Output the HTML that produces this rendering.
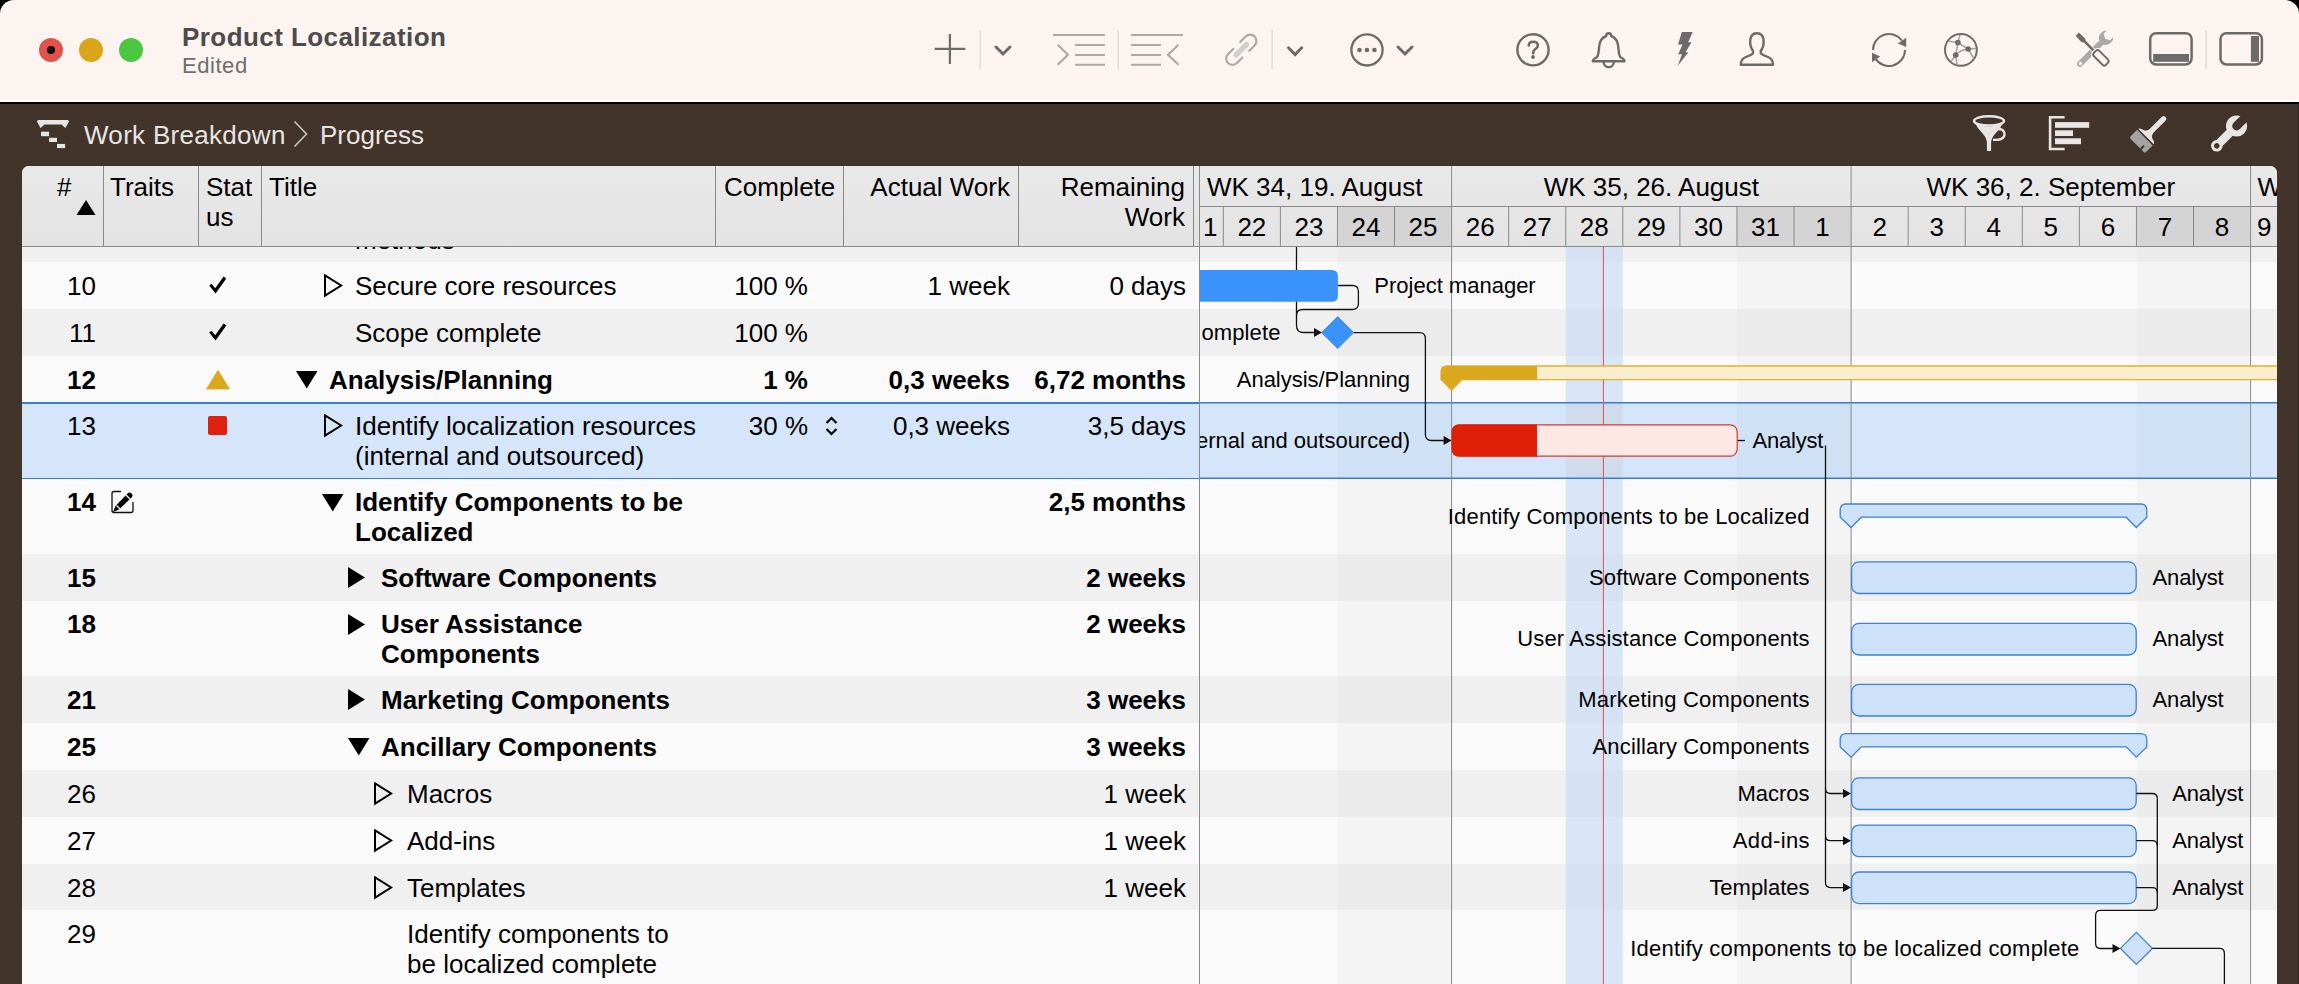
<!DOCTYPE html><html><head><meta charset="utf-8"><style>
*{margin:0;padding:0;box-sizing:border-box}
html,body{width:2299px;height:984px;overflow:hidden;background:#42342b;font-family:"Liberation Sans", sans-serif;}
.a{position:absolute}
.t{position:absolute;font-size:26px;line-height:30px;white-space:nowrap;color:#000}
.b{font-weight:700}
.r{text-align:right}
</style></head><body>
<div class="a" style="left:0;top:0;width:2299px;height:40px;background:#000"></div>
<div class="a" style="left:0;top:0;width:2299px;height:101px;background:#fcf4f1;border-radius:14px 14px 0 0"></div>
<div class="a" style="left:0;top:100px;width:2299px;height:2px;background:#fff"></div>
<div class="a" style="left:0;top:102px;width:2299px;height:1.5px;background:#000"></div>
<div class="a" style="left:39px;top:38px;width:24px;height:24px;border-radius:50%;background:#e0524c"></div>
<div class="a" style="left:79px;top:38px;width:24px;height:24px;border-radius:50%;background:#d9a619"></div>
<div class="a" style="left:119px;top:38px;width:24px;height:24px;border-radius:50%;background:#4cc840"></div>
<div class="a" style="left:47px;top:46px;width:8px;height:8px;border-radius:50%;background:#1a0a08"></div>
<div class="t b" style="left:182px;top:22px;color:#4d4b4b;letter-spacing:0.43px">Product Localization</div>
<div class="t" style="left:182px;top:53px;font-size:22px;line-height:26px;color:#6e6e6e;letter-spacing:0.55px">Edited</div>
<svg class="a" style="left:0;top:0" width="2299" height="100"><path d="M934.7 48.8 H965.3 M949.9 34 V64" stroke="#6b6b6b" stroke-width="2.2" fill="none"/><rect x="979.5" y="30" width="1.3" height="39.5" fill="#dcd8d6"/><path d="M996 47 L1003.0 54 L1010 47" stroke="#6b6b6b" stroke-width="3" fill="none" stroke-linecap="round"/><path d="M1053 35 H1105 M1075 45 H1105 M1075 55 H1105 M1075 64.8 H1105" stroke="#aaaaaa" stroke-width="2" fill="none"/><path d="M1057.7 44.7 L1067.9 54.8 L1057.7 64.8" stroke="#aaaaaa" stroke-width="2.2" fill="none"/><rect x="1117.5" y="30.5" width="1.3" height="39" fill="#dcd8d6"/><path d="M1131 35 H1183 M1131 45 H1161 M1131 55 H1161 M1131 64.8 H1161" stroke="#aaaaaa" stroke-width="2" fill="none"/><path d="M1178.5 44.7 L1168 54.8 L1178.5 64.8" stroke="#aaaaaa" stroke-width="2.2" fill="none"/><g transform="translate(1241.3 49.8) rotate(-45)"><path d="M-4 -6.3 H-12.5 A6.3 6.3 0 0 0 -12.5 6.3 H-4" stroke="#aaaaaa" stroke-width="2.2" fill="none"/><path d="M4 -6.3 H12.5 A6.3 6.3 0 0 1 12.5 6.3 H4" stroke="#aaaaaa" stroke-width="2.2" fill="none"/><rect x="-10" y="-2.7" width="20" height="5.4" rx="2.7" fill="#cfcfcf"/></g><rect x="1271.5" y="30" width="1.3" height="39.5" fill="#dcd8d6"/><path d="M1288.5 47.8 L1295.1 54.599999999999994 L1301.7 47.8" stroke="#6b6b6b" stroke-width="3" fill="none" stroke-linecap="round"/><circle cx="1367" cy="49.9" r="15.6" stroke="#6b6b6b" stroke-width="2.3" fill="none"/><circle cx="1359.5" cy="50" r="2.3" fill="#6b6b6b"/><circle cx="1367" cy="50" r="2.3" fill="#6b6b6b"/><circle cx="1374.4" cy="50" r="2.3" fill="#6b6b6b"/><path d="M1398 47 L1405.0 54 L1412 47" stroke="#6b6b6b" stroke-width="3" fill="none" stroke-linecap="round"/><circle cx="1533" cy="49.8" r="15.6" stroke="#6b6b6b" stroke-width="2.4" fill="none"/><path d="M1528.8 45.5 Q1528.8 41.8 1533.3 41.8 Q1537.8 41.8 1537.8 45.4 Q1537.8 47.6 1535.4 49 Q1533.2 50.3 1533.2 53.3" stroke="#6b6b6b" stroke-width="2.6" fill="none" stroke-linecap="round"/><circle cx="1533" cy="57" r="1.9" fill="#6b6b6b"/><path d="M1608.7 33.2 Q1611.2 33.2 1611.3 36 Q1617.6 38.3 1618.3 47 Q1618.8 55 1620.4 57.3 Q1625 59.6 1624.5 61.2 H1592.9 Q1592.4 59.6 1597 57.3 Q1598.6 55 1599.1 47 Q1599.8 38.3 1606.1 36 Q1606.2 33.2 1608.7 33.2 Z" stroke="#6b6b6b" stroke-width="2.4" fill="none" stroke-linejoin="round"/><path d="M1603.6 62 A5.1 5.1 0 0 0 1613.8 62" stroke="#6b6b6b" stroke-width="2.4" fill="none"/><path d="M1681.8 32 H1692.6 L1688.2 42.3 H1691.6 L1685.5 52.2 H1688.4 L1677.8 65.8 L1681.9 54.3 H1678.2 L1682.5 44.6 H1678 Z" fill="#6b6b6b"/><path d="M1756.9 33.2 Q1763.6 33.2 1763.6 41.8 Q1763.6 47.8 1760.8 50.6 V53.2 Q1762.2 54.8 1768 57 Q1773 59 1773 64.7 H1740.8 Q1740.8 59 1745.8 57 Q1751.6 54.8 1753 53.2 V50.6 Q1750.2 47.8 1750.2 41.8 Q1750.2 33.2 1756.9 33.2 Z" stroke="#6b6b6b" stroke-width="2.4" fill="none" stroke-linejoin="round"/><path d="M1873 49.9 A16 16 0 0 1 1901.9 40.5" stroke="#6b6b6b" stroke-width="2" fill="none"/><path d="M1905 49.9 A16 16 0 0 1 1875.1 57.9" stroke="#6b6b6b" stroke-width="2" fill="none"/><path d="M1897.8 43.5 L1906.2 37.8 L1906.2 46.9 Z" fill="#6b6b6b"/><path d="M1872 52.8 L1872 62.2 L1880.2 56.5 Z" fill="#6b6b6b"/><circle cx="1960.9" cy="49.9" r="15.9" stroke="#6b6b6b" stroke-width="2" fill="none"/><path d="M1957.9 42.6 L1960 35 M1957.9 42.6 L1949 41.3 M1957.9 42.6 L1968.2 49 M1968.2 49 L1976 48.6 M1968.2 49 L1973.8 58.5 M1968.2 49 Q1960 50 1955.7 55 M1955.7 55 L1957.9 42.6 M1955.7 55 L1951 61.5 M1955.7 55 L1957 65.2" stroke="#a3a3a3" stroke-width="1.5" fill="none"/><circle cx="1957.9" cy="42.6" r="2.8" fill="#6b6b6b"/><circle cx="1968.2" cy="49" r="2.8" fill="#6b6b6b"/><circle cx="1955.7" cy="55" r="2.8" fill="#6b6b6b"/><g transform="translate(2093.5 50.4) rotate(45)"><rect x="-2.9" y="-13" width="5.8" height="35" rx="2.9" fill="#a9a9a9"/><circle cx="0" cy="18.5" r="1.7" fill="#fcf4f1"/><path d="M-2.9 -11 Q-7 -13 -7 -18 Q-7 -21.5 -4.6 -23.5 V-18.8 L0 -16.5 L4.6 -18.8 V-23.5 Q7 -21.5 7 -18 Q7 -13 2.9 -11 Z" fill="#a9a9a9"/></g><g transform="translate(2093.5 50.4) rotate(-45)"><path d="M-2.2 -23 H2.2 L2.6 -15 L1.3 -12 V1.5 H-1.3 V-12 L-2.6 -15 Z" fill="#6b6b6b" stroke="#fcf4f1" stroke-width="1.5" paint-order="stroke"/><rect x="-3.8" y="2" width="7.6" height="17" rx="2.5" stroke="#fcf4f1" stroke-width="4.5" fill="#fcf4f1"/><rect x="-3.8" y="2" width="7.6" height="17" rx="2.5" stroke="#6b6b6b" stroke-width="1.9" fill="none"/></g><rect x="2150.2" y="33.2" width="41.4" height="31.3" rx="6" stroke="#6b6b6b" stroke-width="2.5" fill="none"/><rect x="2153.2" y="54" width="35.8" height="7.8" fill="#6b6b6b"/><rect x="2205.4" y="30" width="1.3" height="39.8" fill="#dcd8d6"/><rect x="2220.5" y="33.2" width="41.4" height="31.3" rx="6" stroke="#6b6b6b" stroke-width="2.5" fill="none"/><rect x="2250.9" y="36" width="8.1" height="25.8" fill="#6b6b6b"/></svg>
<div class="t" style="left:84px;top:120px;color:#e8e5e3;letter-spacing:0.3px">Work Breakdown</div>
<div class="t" style="left:320px;top:120px;color:#e8e5e3">Progress</div>
<svg class="a" style="left:0;top:103px" width="2299" height="63" viewBox="0 103 2299 63"><path d="M38.5 120 H67.5 Q69 120 69 121.5 L65.4 128.1 L61.5 124.6 H44.5 L40.5 128.1 L37 121.5 Q37 120 38.5 120 Z" fill="#e8e6e4"/><rect x="41" y="131.7" width="8.1" height="4.5" fill="#e8e6e4"/><rect x="49.1" y="137.8" width="7.9" height="4.2" fill="#e8e6e4"/><rect x="57" y="143.9" width="8.1" height="4.2" fill="#e8e6e4"/><path d="M294.5 121.5 L306.5 134 L294.5 146.5" stroke="#c9c5c2" stroke-width="1.6" fill="none"/><ellipse cx="1989" cy="120.9" rx="15" ry="4.6" stroke="#e8e6e4" stroke-width="2.4" fill="none"/><path d="M1974.5 122 Q1977 128 1983 134 Q1986.8 138 1986.9 143 V151 H1991.1 V143 Q1991.2 138 1995 134 Q2001 128 2003.5 122 Q1996 126.5 1989 126.5 Q1982 126.5 1974.5 122 Z" fill="#e8e6e4"/><path d="M1992 131 Q1998 127.5 2002.5 130 Q2005.5 132.5 2004 136.5 Q2001.5 140.5 1993 139.8" stroke="#e8e6e4" stroke-width="2.4" fill="none"/><path d="M2064.6 117.2 H2050.1 V149 H2064.6" stroke="#e8e6e4" stroke-width="2.6" fill="none"/><rect x="2055" y="122.1" width="34.2" height="5.7" fill="#e8e6e4"/><rect x="2055" y="130.3" width="18" height="5.7" fill="#e8e6e4"/><rect x="2055" y="138.3" width="26" height="5.9" fill="#e8e6e4"/><g transform="translate(2145.3 137.2) rotate(45)"><rect x="-2.7" y="-28.5" width="5.4" height="22" rx="2.7" fill="#e8e6e4"/><path d="M-2.7 -9 Q-3 -5 -6.5 -3.8 Q-10.5 -3 -11 -1 H11 Q10.5 -3 6.5 -3.8 Q3 -5 2.7 -9 Z" fill="#e8e6e4"/><path d="M-11 0.6 H11 V10 Q11 11.6 9.4 11.6 H6.2 V7 H4.2 V11.6 H-9.4 Q-11 11.6 -11 10 Z" fill="#a3a3a3"/></g><mask id="wm"><rect x="2190" y="105" width="80" height="60" fill="#fff"/><g transform="translate(2216.8 145.8) rotate(45)"><circle cx="0" cy="0" r="2.7" fill="#000"/><circle cx="0" cy="-28" r="4.4" fill="#000"/><rect x="-4.4" y="-42" width="8.8" height="14" fill="#000"/></g></mask><g mask="url(#wm)"><g transform="translate(2216.8 145.8) rotate(45)"><rect x="-4.3" y="-24" width="8.6" height="24" fill="#e8e6e4"/><circle cx="0" cy="0" r="5.8" fill="#e8e6e4"/><circle cx="0" cy="-28" r="10.6" fill="#e8e6e4"/></g></g></svg>
<div class="a" style="left:22px;top:166px;width:2255px;height:818px;background:#fafafa;border-radius:7px 7px 0 0;overflow:hidden">
<div class="a" style="left:0px;top:0px;width:2255px;height:80px;background:linear-gradient(#e9e9e9,#e3e3e3)"></div>
<div class="a" style="left:0px;top:80px;width:2255px;height:1px;background:#8a8a8a"></div>
<div class="a" style="left:81px;top:0px;width:1px;height:80px;background:#8a8a8a"></div>
<div class="a" style="left:176px;top:0px;width:1px;height:80px;background:#8a8a8a"></div>
<div class="a" style="left:239px;top:0px;width:1px;height:80px;background:#8a8a8a"></div>
<div class="a" style="left:693px;top:0px;width:1px;height:80px;background:#8a8a8a"></div>
<div class="a" style="left:821px;top:0px;width:1px;height:80px;background:#8a8a8a"></div>
<div class="a" style="left:996px;top:0px;width:1px;height:80px;background:#8a8a8a"></div>
<div class="a" style="left:1171px;top:0px;width:1px;height:80px;background:#8a8a8a"></div>
<div class="a" style="left:1177px;top:0px;width:1px;height:80px;background:#8a8a8a"></div>
<div class="t" style="left:35px;top:6px;">#</div>
<svg class="a" style="left:54px;top:34px" width="20" height="15"><path d="M10 0L19.5 15H0.5Z" fill="#000"/></svg>
<div class="t" style="left:88px;top:6px;">Traits</div>
<div class="t" style="left:184px;top:6px;">Stat</div>
<div class="t" style="left:184px;top:36px;">us</div>
<div class="t" style="left:247px;top:6px;">Title</div>
<div class="t" style="left:702px;top:6px;">Complete</div>
<div class="t" style="right:1267px;top:6px;">Actual Work</div>
<div class="t" style="right:1092px;top:6px;">Remaining</div>
<div class="t" style="right:1092px;top:36px;">Work</div>
<div class="a" style="left:0px;top:81px;width:1177px;height:15px;background:#f0f0f0"></div>
<div class="a" style="left:0;top:81px;width:1177px;height:15px;overflow:hidden"><div class="t" style="left:333px;top:-22.5px">methods</div></div>
<div class="a" style="left:0px;top:96px;width:1177px;height:47px;background:#fafafa"></div>
<div class="t" style="right:2181px;top:105px;">10</div>
<svg class="a" style="left:186px;top:110px" width="19" height="19"><path d="M1.2 9.5 L3.6 7.7 L7.2 12.3 L15.6 0.6 L18.3 2.4 L7.6 17.6 Z" fill="#000"/></svg>
<svg class="a" style="left:302px;top:108px" width="19" height="24"><path d="M1 1.3 L17.2 11.5 L1 21.7 Z" fill="none" stroke="#000" stroke-width="2" stroke-linejoin="miter"/></svg>
<div class="t" style="left:333px;top:105px;">Secure core resources</div>
<div class="t" style="right:1469px;top:105px;">100 %</div>
<div class="t" style="right:1267px;top:105px;">1 week</div>
<div class="t" style="right:1091px;top:105px;">0 days</div>
<div class="a" style="left:0px;top:143px;width:1177px;height:47px;background:#f0f0f0"></div>
<div class="t" style="right:2181px;top:152px;">11</div>
<svg class="a" style="left:186px;top:157px" width="19" height="19"><path d="M1.2 9.5 L3.6 7.7 L7.2 12.3 L15.6 0.6 L18.3 2.4 L7.6 17.6 Z" fill="#000"/></svg>
<div class="t" style="left:333px;top:152px;">Scope complete</div>
<div class="t" style="right:1469px;top:152px;">100 %</div>
<div class="a" style="left:0px;top:190px;width:1177px;height:46px;background:#fafafa"></div>
<div class="t b" style="right:2181px;top:199px;">12</div>
<svg class="a" style="left:184px;top:204px" width="24" height="20"><path d="M12 0.5 L23.3 18.9 L0.7 18.9 Z" fill="#d9a81c" stroke="#d9a81c" stroke-width="1" stroke-linejoin="round"/></svg>
<svg class="a" style="left:274px;top:205px" width="22" height="18"><path d="M0 0 H21.5 L10.75 17.5 Z" fill="#000"/></svg>
<div class="t b" style="left:307px;top:199px;">Analysis/Planning</div>
<div class="t b" style="right:1469px;top:199px;">1 %</div>
<div class="t b" style="right:1267px;top:199px;">0,3 weeks</div>
<div class="t b" style="right:1091px;top:199px;">6,72 months</div>
<div class="a" style="left:0px;top:236px;width:1177px;height:77px;background:#d5e6fa"></div>
<div class="a" style="left:0px;top:236px;width:2255px;height:1.5px;background:#3b7bd8"></div>
<div class="a" style="left:0px;top:311.5px;width:2255px;height:1.5px;background:#3b7bd8"></div>
<div class="t" style="right:2181px;top:245px;">13</div>
<div class="a" style="left:186px;top:250px;width:19px;height:19px;background:#e0200e;border-radius:2px"></div>
<svg class="a" style="left:302px;top:248px" width="19" height="24"><path d="M1 1.3 L17.2 11.5 L1 21.7 Z" fill="none" stroke="#000" stroke-width="2" stroke-linejoin="miter"/></svg>
<div class="t" style="left:333px;top:245px;">Identify localization resources</div>
<div class="t" style="left:333px;top:275px;">(internal and outsourced)</div>
<div class="t" style="right:1469px;top:245px;">30 %</div>
<div class="t" style="right:1267px;top:245px;">0,3 weeks</div>
<div class="t" style="right:1091px;top:245px;">3,5 days</div>
<svg class="a" style="left:803px;top:250px" width="13" height="20"><path d="M1.5 7 L6.5 2 L11.5 7 M1.5 13 L6.5 18 L11.5 13" fill="none" stroke="#000" stroke-width="2.2"/></svg>
<div class="a" style="left:0px;top:313px;width:1177px;height:75px;background:#fafafa"></div>
<div class="t b" style="right:2181px;top:321px;">14</div>
<svg class="a" style="left:88px;top:323px" width="26" height="26" viewBox="0 0 26 26"><path d="M11 2.5 H4 Q2 2.5 2 4.5 V21.5 Q2 23.5 4 23.5 H21 Q23 23.5 23 21.5 V13" fill="none" stroke="#111" stroke-width="1.3"/><path d="M3 23 L5.5 17 L17.5 4.5 Q19.5 2.5 21.5 4.5 Q23.5 6.5 21.5 8.5 L9 20.5 Z" fill="#000"/><path d="M6.5 16.5 L10 20" stroke="#fafafa" stroke-width="1.3"/><path d="M16 6 L20 10" stroke="#fafafa" stroke-width="1.3"/></svg>
<svg class="a" style="left:300px;top:328px" width="22" height="18"><path d="M0 0 H21.5 L10.75 17.5 Z" fill="#000"/></svg>
<div class="t b" style="left:333px;top:321px;">Identify Components to be</div>
<div class="t b" style="left:333px;top:351px;">Localized</div>
<div class="t b" style="right:1091px;top:321px;">2,5 months</div>
<div class="a" style="left:0px;top:388px;width:1177px;height:47px;background:#f0f0f0"></div>
<div class="t b" style="right:2181px;top:397px;">15</div>
<svg class="a" style="left:326px;top:401px" width="18" height="22"><path d="M0 0 L17 10.5 L0 21 Z" fill="#000"/></svg>
<div class="t b" style="left:359px;top:397px;">Software Components</div>
<div class="t b" style="right:1091px;top:397px;">2 weeks</div>
<div class="a" style="left:0px;top:435px;width:1177px;height:75px;background:#fafafa"></div>
<div class="t b" style="right:2181px;top:443px;">18</div>
<svg class="a" style="left:326px;top:448px" width="18" height="22"><path d="M0 0 L17 10.5 L0 21 Z" fill="#000"/></svg>
<div class="t b" style="left:359px;top:443px;">User Assistance</div>
<div class="t b" style="left:359px;top:473px;">Components</div>
<div class="t b" style="right:1091px;top:443px;">2 weeks</div>
<div class="a" style="left:0px;top:510px;width:1177px;height:47px;background:#f0f0f0"></div>
<div class="t b" style="right:2181px;top:519px;">21</div>
<svg class="a" style="left:326px;top:523px" width="18" height="22"><path d="M0 0 L17 10.5 L0 21 Z" fill="#000"/></svg>
<div class="t b" style="left:359px;top:519px;">Marketing Components</div>
<div class="t b" style="right:1091px;top:519px;">3 weeks</div>
<div class="a" style="left:0px;top:557px;width:1177px;height:47px;background:#fafafa"></div>
<div class="t b" style="right:2181px;top:566px;">25</div>
<svg class="a" style="left:326px;top:572px" width="22" height="18"><path d="M0 0 H21.5 L10.75 17.5 Z" fill="#000"/></svg>
<div class="t b" style="left:359px;top:566px;">Ancillary Components</div>
<div class="t b" style="right:1091px;top:566px;">3 weeks</div>
<div class="a" style="left:0px;top:604px;width:1177px;height:47px;background:#f0f0f0"></div>
<div class="t" style="right:2181px;top:613px;">26</div>
<svg class="a" style="left:352px;top:616px" width="19" height="24"><path d="M1 1.3 L17.2 11.5 L1 21.7 Z" fill="none" stroke="#000" stroke-width="2" stroke-linejoin="miter"/></svg>
<div class="t" style="left:385px;top:613px;">Macros</div>
<div class="t" style="right:1091px;top:613px;">1 week</div>
<div class="a" style="left:0px;top:651px;width:1177px;height:47px;background:#fafafa"></div>
<div class="t" style="right:2181px;top:660px;">27</div>
<svg class="a" style="left:352px;top:663px" width="19" height="24"><path d="M1 1.3 L17.2 11.5 L1 21.7 Z" fill="none" stroke="#000" stroke-width="2" stroke-linejoin="miter"/></svg>
<div class="t" style="left:385px;top:660px;">Add-ins</div>
<div class="t" style="right:1091px;top:660px;">1 week</div>
<div class="a" style="left:0px;top:698px;width:1177px;height:46px;background:#f0f0f0"></div>
<div class="t" style="right:2181px;top:707px;">28</div>
<svg class="a" style="left:352px;top:710px" width="19" height="24"><path d="M1 1.3 L17.2 11.5 L1 21.7 Z" fill="none" stroke="#000" stroke-width="2" stroke-linejoin="miter"/></svg>
<div class="t" style="left:385px;top:707px;">Templates</div>
<div class="t" style="right:1091px;top:707px;">1 week</div>
<div class="a" style="left:0px;top:744px;width:1177px;height:74px;background:#fafafa"></div>
<div class="t" style="right:2181px;top:753px;">29</div>
<div class="t" style="left:385px;top:753px;">Identify components to</div>
<div class="t" style="left:385px;top:783px;">be localized complete</div>
<svg class="a" style="left:1177px;top:0px" width="1078" height="818" viewBox="1199 166 1078 818" font-family="Liberation Sans, sans-serif"><rect x="1337.4599999999998" y="207" width="57.07" height="39" fill="#d4d4d4"/><rect x="1394.53" y="207" width="57.07" height="39" fill="#d4d4d4"/><rect x="1736.9499999999998" y="207" width="57.07" height="39" fill="#d4d4d4"/><rect x="1794.02" y="207" width="57.07" height="39" fill="#d4d4d4"/><rect x="2136.44" y="207" width="57.07" height="39" fill="#d4d4d4"/><rect x="2193.5099999999998" y="207" width="57.07" height="39" fill="#d4d4d4"/><rect x="1199" y="247" width="1078" height="15" fill="#f0f0f0"/><rect x="1337.4599999999998" y="247" width="114.14" height="15" fill="#ebebeb"/><rect x="1736.9499999999998" y="247" width="114.14" height="15" fill="#ebebeb"/><rect x="2136.44" y="247" width="114.14" height="15" fill="#ebebeb"/><rect x="1199" y="262" width="1078" height="47" fill="#fafafa"/><rect x="1337.4599999999998" y="262" width="114.14" height="47" fill="#f4f4f4"/><rect x="1736.9499999999998" y="262" width="114.14" height="47" fill="#f4f4f4"/><rect x="2136.44" y="262" width="114.14" height="47" fill="#f4f4f4"/><rect x="1199" y="309" width="1078" height="47" fill="#f0f0f0"/><rect x="1337.4599999999998" y="309" width="114.14" height="47" fill="#ebebeb"/><rect x="1736.9499999999998" y="309" width="114.14" height="47" fill="#ebebeb"/><rect x="2136.44" y="309" width="114.14" height="47" fill="#ebebeb"/><rect x="1199" y="356" width="1078" height="46" fill="#fafafa"/><rect x="1337.4599999999998" y="356" width="114.14" height="46" fill="#f4f4f4"/><rect x="1736.9499999999998" y="356" width="114.14" height="46" fill="#f4f4f4"/><rect x="2136.44" y="356" width="114.14" height="46" fill="#f4f4f4"/><rect x="1199" y="402" width="1078" height="77" fill="#d5e6fa"/><rect x="1337.4599999999998" y="402" width="114.14" height="77" fill="#cfe1f5"/><rect x="1736.9499999999998" y="402" width="114.14" height="77" fill="#cfe1f5"/><rect x="2136.44" y="402" width="114.14" height="77" fill="#cfe1f5"/><rect x="1199" y="479" width="1078" height="75" fill="#fafafa"/><rect x="1337.4599999999998" y="479" width="114.14" height="75" fill="#f4f4f4"/><rect x="1736.9499999999998" y="479" width="114.14" height="75" fill="#f4f4f4"/><rect x="2136.44" y="479" width="114.14" height="75" fill="#f4f4f4"/><rect x="1199" y="554" width="1078" height="47" fill="#f0f0f0"/><rect x="1337.4599999999998" y="554" width="114.14" height="47" fill="#ebebeb"/><rect x="1736.9499999999998" y="554" width="114.14" height="47" fill="#ebebeb"/><rect x="2136.44" y="554" width="114.14" height="47" fill="#ebebeb"/><rect x="1199" y="601" width="1078" height="75" fill="#fafafa"/><rect x="1337.4599999999998" y="601" width="114.14" height="75" fill="#f4f4f4"/><rect x="1736.9499999999998" y="601" width="114.14" height="75" fill="#f4f4f4"/><rect x="2136.44" y="601" width="114.14" height="75" fill="#f4f4f4"/><rect x="1199" y="676" width="1078" height="47" fill="#f0f0f0"/><rect x="1337.4599999999998" y="676" width="114.14" height="47" fill="#ebebeb"/><rect x="1736.9499999999998" y="676" width="114.14" height="47" fill="#ebebeb"/><rect x="2136.44" y="676" width="114.14" height="47" fill="#ebebeb"/><rect x="1199" y="723" width="1078" height="47" fill="#fafafa"/><rect x="1337.4599999999998" y="723" width="114.14" height="47" fill="#f4f4f4"/><rect x="1736.9499999999998" y="723" width="114.14" height="47" fill="#f4f4f4"/><rect x="2136.44" y="723" width="114.14" height="47" fill="#f4f4f4"/><rect x="1199" y="770" width="1078" height="47" fill="#f0f0f0"/><rect x="1337.4599999999998" y="770" width="114.14" height="47" fill="#ebebeb"/><rect x="1736.9499999999998" y="770" width="114.14" height="47" fill="#ebebeb"/><rect x="2136.44" y="770" width="114.14" height="47" fill="#ebebeb"/><rect x="1199" y="817" width="1078" height="47" fill="#fafafa"/><rect x="1337.4599999999998" y="817" width="114.14" height="47" fill="#f4f4f4"/><rect x="1736.9499999999998" y="817" width="114.14" height="47" fill="#f4f4f4"/><rect x="2136.44" y="817" width="114.14" height="47" fill="#f4f4f4"/><rect x="1199" y="864" width="1078" height="46" fill="#f0f0f0"/><rect x="1337.4599999999998" y="864" width="114.14" height="46" fill="#ebebeb"/><rect x="1736.9499999999998" y="864" width="114.14" height="46" fill="#ebebeb"/><rect x="2136.44" y="864" width="114.14" height="46" fill="#ebebeb"/><rect x="1199" y="910" width="1078" height="74" fill="#fafafa"/><rect x="1337.4599999999998" y="910" width="114.14" height="74" fill="#f4f4f4"/><rect x="1736.9499999999998" y="910" width="114.14" height="74" fill="#f4f4f4"/><rect x="2136.44" y="910" width="114.14" height="74" fill="#f4f4f4"/><rect x="1565.74" y="247" width="57.07" height="15" fill="#d4e2f4" /><rect x="1565.74" y="262" width="57.07" height="47" fill="#d8e6f8" /><rect x="1565.74" y="309" width="57.07" height="47" fill="#d4e2f4" /><rect x="1565.74" y="356" width="57.07" height="46" fill="#d8e6f8" /><rect x="1565.74" y="402" width="57.07" height="77" fill="#d0dcec" /><rect x="1565.74" y="479" width="57.07" height="75" fill="#d8e6f8" /><rect x="1565.74" y="554" width="57.07" height="47" fill="#d4e2f4" /><rect x="1565.74" y="601" width="57.07" height="75" fill="#d8e6f8" /><rect x="1565.74" y="676" width="57.07" height="47" fill="#d4e2f4" /><rect x="1565.74" y="723" width="57.07" height="47" fill="#d8e6f8" /><rect x="1565.74" y="770" width="57.07" height="47" fill="#d4e2f4" /><rect x="1565.74" y="817" width="57.07" height="47" fill="#d8e6f8" /><rect x="1565.74" y="864" width="57.07" height="46" fill="#d4e2f4" /><rect x="1565.74" y="910" width="57.07" height="74" fill="#d8e6f8" /><rect x="1199" y="402" width="1078" height="1.5" fill="#3b7bd8"/><rect x="1199" y="477.5" width="1078" height="1.5" fill="#3b7bd8"/><rect x="1199" y="206" width="1078" height="1" fill="#8a8a8a"/><rect x="1222.82" y="207" width="1" height="39" fill="#8a8a8a"/><rect x="1279.8899999999999" y="207" width="1" height="39" fill="#8a8a8a"/><rect x="1336.9599999999998" y="207" width="1" height="39" fill="#8a8a8a"/><rect x="1394.03" y="207" width="1" height="39" fill="#8a8a8a"/><rect x="1451.1" y="166" width="1" height="818" fill="#8a8a8a"/><rect x="1508.1699999999998" y="207" width="1" height="39" fill="#8a8a8a"/><rect x="1565.24" y="207" width="1" height="39" fill="#8a8a8a"/><rect x="1622.31" y="207" width="1" height="39" fill="#8a8a8a"/><rect x="1679.3799999999999" y="207" width="1" height="39" fill="#8a8a8a"/><rect x="1736.4499999999998" y="207" width="1" height="39" fill="#8a8a8a"/><rect x="1793.52" y="207" width="1" height="39" fill="#8a8a8a"/><rect x="1850.59" y="166" width="1" height="818" fill="#8a8a8a"/><rect x="1907.6599999999999" y="207" width="1" height="39" fill="#8a8a8a"/><rect x="1964.73" y="207" width="1" height="39" fill="#8a8a8a"/><rect x="2021.8" y="207" width="1" height="39" fill="#8a8a8a"/><rect x="2078.87" y="207" width="1" height="39" fill="#8a8a8a"/><rect x="2135.94" y="207" width="1" height="39" fill="#8a8a8a"/><rect x="2193.0099999999998" y="207" width="1" height="39" fill="#8a8a8a"/><rect x="2250.08" y="166" width="1" height="818" fill="#8a8a8a"/><text x="1207" y="196" font-size="26" text-anchor="start" >WK 34, 19. August</text><text x="1651.3449999999998" y="196" font-size="26" text-anchor="middle" >WK 35, 26. August</text><text x="2050.835" y="196" font-size="26" text-anchor="middle" >WK 36, 2. September</text><text x="2257.58" y="196" font-size="26" text-anchor="start" >W</text><text x="1203" y="236" font-size="26" text-anchor="start" >1</text><text x="1251.855" y="236" font-size="26" text-anchor="middle" >22</text><text x="1308.925" y="236" font-size="26" text-anchor="middle" >23</text><text x="1365.995" y="236" font-size="26" text-anchor="middle" >24</text><text x="1423.065" y="236" font-size="26" text-anchor="middle" >25</text><text x="1480.135" y="236" font-size="26" text-anchor="middle" >26</text><text x="1537.205" y="236" font-size="26" text-anchor="middle" >27</text><text x="1594.275" y="236" font-size="26" text-anchor="middle" >28</text><text x="1651.345" y="236" font-size="26" text-anchor="middle" >29</text><text x="1708.415" y="236" font-size="26" text-anchor="middle" >30</text><text x="1765.485" y="236" font-size="26" text-anchor="middle" >31</text><text x="1822.555" y="236" font-size="26" text-anchor="middle" >1</text><text x="1879.625" y="236" font-size="26" text-anchor="middle" >2</text><text x="1936.695" y="236" font-size="26" text-anchor="middle" >3</text><text x="1993.765" y="236" font-size="26" text-anchor="middle" >4</text><text x="2050.835" y="236" font-size="26" text-anchor="middle" >5</text><text x="2107.9049999999997" y="236" font-size="26" text-anchor="middle" >6</text><text x="2164.975" y="236" font-size="26" text-anchor="middle" >7</text><text x="2222.0449999999996" y="236" font-size="26" text-anchor="middle" >8</text><text x="2257" y="236" font-size="26" text-anchor="start" >9</text><rect x="1602.9" y="247" width="1" height="737" fill="#e0524c"/><path d="M1296.5 247 V325.5 Q1296.5 332.5 1303.5 332.5 H1315" fill="none" stroke="#111" stroke-width="1.3" /><path d="M1314 328.0 L1322 332.5 L1314 337.0 Z" fill="#111"/><path d="M1190 269.9 H1331.9 Q1337.9 269.9 1337.9 275.9 V295.8 Q1337.9 301.8 1331.9 301.8 H1190 Z" fill="#3a93fb"/><path d="M1337.9 285.5 H1352.4 Q1358.4 285.5 1358.4 291.5 V303.5 Q1358.4 309.5 1352.4 309.5 H1302.5 Q1296.5 309.5 1296.5 315.5" fill="none" stroke="#111" stroke-width="1.3" /><text x="1374.3" y="293" font-size="22" text-anchor="start"  textLength="161.4" lengthAdjust="spacing">Project manager</text><path d="M1337.7 316.6 L1353.7 332.6 L1337.7 348.6 L1321.7 332.6 Z" fill="#3a93fb" stroke="#2f7fe0" stroke-width="0.8"/><text x="1280.4" y="339.5" font-size="22" text-anchor="end"  textLength="79" lengthAdjust="spacing">omplete</text><path d="M1353.7 332.6 H1419.5 Q1425.4 332.6 1425.4 338.6 V434.5 Q1425.4 440.5 1431.4 440.5 H1444" fill="none" stroke="#111" stroke-width="1.3" /><path d="M1443.6 436.0 L1451.6 440.5 L1443.6 445.0 Z" fill="#111"/><text x="1410" y="386.5" font-size="22" text-anchor="end"  textLength="173.2" lengthAdjust="spacing">Analysis/Planning</text><path d="M2290 366 H1447 Q1441 366 1441 372 V379.6 L1451.6 390 L1462 379.6 H2290 Z" fill="#fbeecf" stroke="#e3b12f" stroke-width="1.3"/><path d="M1537 366 H1447 Q1441 366 1441 372 V379.6 L1451.6 390 L1462 379.6 H1537 Z" fill="#d9a81c"/><text x="1410" y="447.5" font-size="22" text-anchor="end" >ernal and outsourced)</text><rect x="1452.2" y="424.9" width="285" height="31.2" rx="7" fill="#fde8e5" stroke="#dc3a2a" stroke-width="1.2"/><path d="M1537 424.4 H1459.1 Q1451.6 424.4 1451.6 431.9 V449.1 Q1451.6 456.6 1459.1 456.6 H1537 Z" fill="#e01f08"/><path d="M1737.6 440.5 H1745" fill="none" stroke="#111" stroke-width="1.3" /><text x="1752.4" y="447.5" font-size="22" text-anchor="start"  textLength="71" lengthAdjust="spacing">Analyst</text><path d="M1825.5 445.4 V882.6 Q1825.5 887.6 1830.5 887.6 H1843" fill="none" stroke="#111" stroke-width="1.3" /><path d="M1825.5 788.5 Q1825.5 793.5 1830.5 793.5 H1843" fill="none" stroke="#111" stroke-width="1.3" /><path d="M1825.5 835.7 Q1825.5 840.7 1830.5 840.7 H1843" fill="none" stroke="#111" stroke-width="1.3" /><path d="M1843 789.0 L1851 793.5 L1843 798.0 Z" fill="#111"/><path d="M1843 836.2 L1851 840.7 L1843 845.2 Z" fill="#111"/><path d="M1843 883.1 L1851 887.6 L1843 892.1 Z" fill="#111"/><path d="M1846.2 504.00000000000006 H2140.8 Q2146.8 504.00000000000006 2146.8 510.00000000000006 V517.2 L2136.3 527.5 L2126.2 517.2 H1861.3 L1851.1 527.5 L1840.2 517.2 V510.00000000000006 Q1840.2 504.00000000000006 1846.2 504.00000000000006 Z" fill="#cde1f8" stroke="#3d80d9" stroke-width="1.3"/><text x="1809.5" y="523.8" font-size="22" text-anchor="end"  textLength="361.7" lengthAdjust="spacing">Identify Components to be Localized</text><path d="M1846.2 733.6999999999999 H2140.8 Q2146.8 733.6999999999999 2146.8 739.6999999999999 V746.9 L2136.3 757.1999999999999 L2126.2 746.9 H1861.3 L1851.1 757.1999999999999 L1840.2 746.9 V739.6999999999999 Q1840.2 733.6999999999999 1846.2 733.6999999999999 Z" fill="#cde1f8" stroke="#3d80d9" stroke-width="1.3"/><text x="1809.5" y="753.8" font-size="22" text-anchor="end"  textLength="217" lengthAdjust="spacing">Ancillary Components</text><rect x="1851.6" y="561.9" width="284.6" height="31.6" rx="7.5" fill="#cde1f8" stroke="#3d80d9" stroke-width="1.3"/><text x="1809.5" y="584.8" font-size="22" text-anchor="end"  textLength="220.5" lengthAdjust="spacing">Software Components</text><text x="2152.6" y="584.8" font-size="22" text-anchor="start"  textLength="71" lengthAdjust="spacing">Analyst</text><rect x="1851.6" y="623.4" width="284.6" height="31.6" rx="7.5" fill="#cde1f8" stroke="#3d80d9" stroke-width="1.3"/><text x="1809.5" y="646.3" font-size="22" text-anchor="end"  textLength="292.2" lengthAdjust="spacing">User Assistance Components</text><text x="2152.6" y="646.3" font-size="22" text-anchor="start"  textLength="71" lengthAdjust="spacing">Analyst</text><rect x="1851.6" y="684.4" width="284.6" height="31.6" rx="7.5" fill="#cde1f8" stroke="#3d80d9" stroke-width="1.3"/><text x="1809.5" y="707.3" font-size="22" text-anchor="end"  textLength="231.2" lengthAdjust="spacing">Marketing Components</text><text x="2152.6" y="707.3" font-size="22" text-anchor="start"  textLength="71" lengthAdjust="spacing">Analyst</text><rect x="1851.6" y="777.9" width="284.6" height="31.6" rx="7.5" fill="#cde1f8" stroke="#3d80d9" stroke-width="1.3"/><text x="1809.5" y="800.8" font-size="22" text-anchor="end"  textLength="72" lengthAdjust="spacing">Macros</text><text x="2172.3" y="800.8" font-size="22" text-anchor="start"  textLength="71" lengthAdjust="spacing">Analyst</text><rect x="1851.6" y="825.1" width="284.6" height="31.6" rx="7.5" fill="#cde1f8" stroke="#3d80d9" stroke-width="1.3"/><text x="1809.5" y="848.0" font-size="22" text-anchor="end"  textLength="76.7" lengthAdjust="spacing">Add-ins</text><text x="2172.3" y="848.0" font-size="22" text-anchor="start"  textLength="71" lengthAdjust="spacing">Analyst</text><rect x="1851.6" y="872.0" width="284.6" height="31.6" rx="7.5" fill="#cde1f8" stroke="#3d80d9" stroke-width="1.3"/><text x="1809.5" y="894.9" font-size="22" text-anchor="end"  textLength="100.1" lengthAdjust="spacing">Templates</text><text x="2172.3" y="894.9" font-size="22" text-anchor="start"  textLength="71" lengthAdjust="spacing">Analyst</text><path d="M2136.3 793.5 H2152.3 Q2157.3 793.5 2157.3 798.5" fill="none" stroke="#111" stroke-width="1.3" /><path d="M2136.3 840.7 H2152.3 Q2157.3 840.7 2157.3 845.7" fill="none" stroke="#111" stroke-width="1.3" /><path d="M2136.3 887.6 H2152.3 Q2157.3 887.6 2157.3 892.6" fill="none" stroke="#111" stroke-width="1.3" /><path d="M2157.3 798.5 V905.4 Q2157.3 910.4 2152.3 910.4 H2100.6 Q2095.6 910.4 2095.6 915.4 V943.5 Q2095.6 948.5 2100.6 948.5 H2113" fill="none" stroke="#111" stroke-width="1.3" /><path d="M2112.5 944.0 L2120.5 948.5 L2112.5 953.0 Z" fill="#111"/><path d="M2136.4 932.4 L2152.4 948.4 L2136.4 964.4 L2120.4 948.4 Z" fill="#cde1f8" stroke="#3d80d9" stroke-width="1.3"/><text x="2079.3" y="955.7" font-size="22" text-anchor="end"  textLength="449.1" lengthAdjust="spacing">Identify components to be localized complete</text><path d="M2152.4 948.4 H2219.4 Q2224.4 948.4 2224.4 953.4 V990" fill="none" stroke="#111" stroke-width="1.3" /></svg>
<div class="a" style="left:1177px;top:81px;width:1px;height:737px;background:#8a8a8a"></div>
</div>
<div class="a" style="left:2298px;top:103px;width:1px;height:881px;background:#2e2925"></div>
</body></html>
